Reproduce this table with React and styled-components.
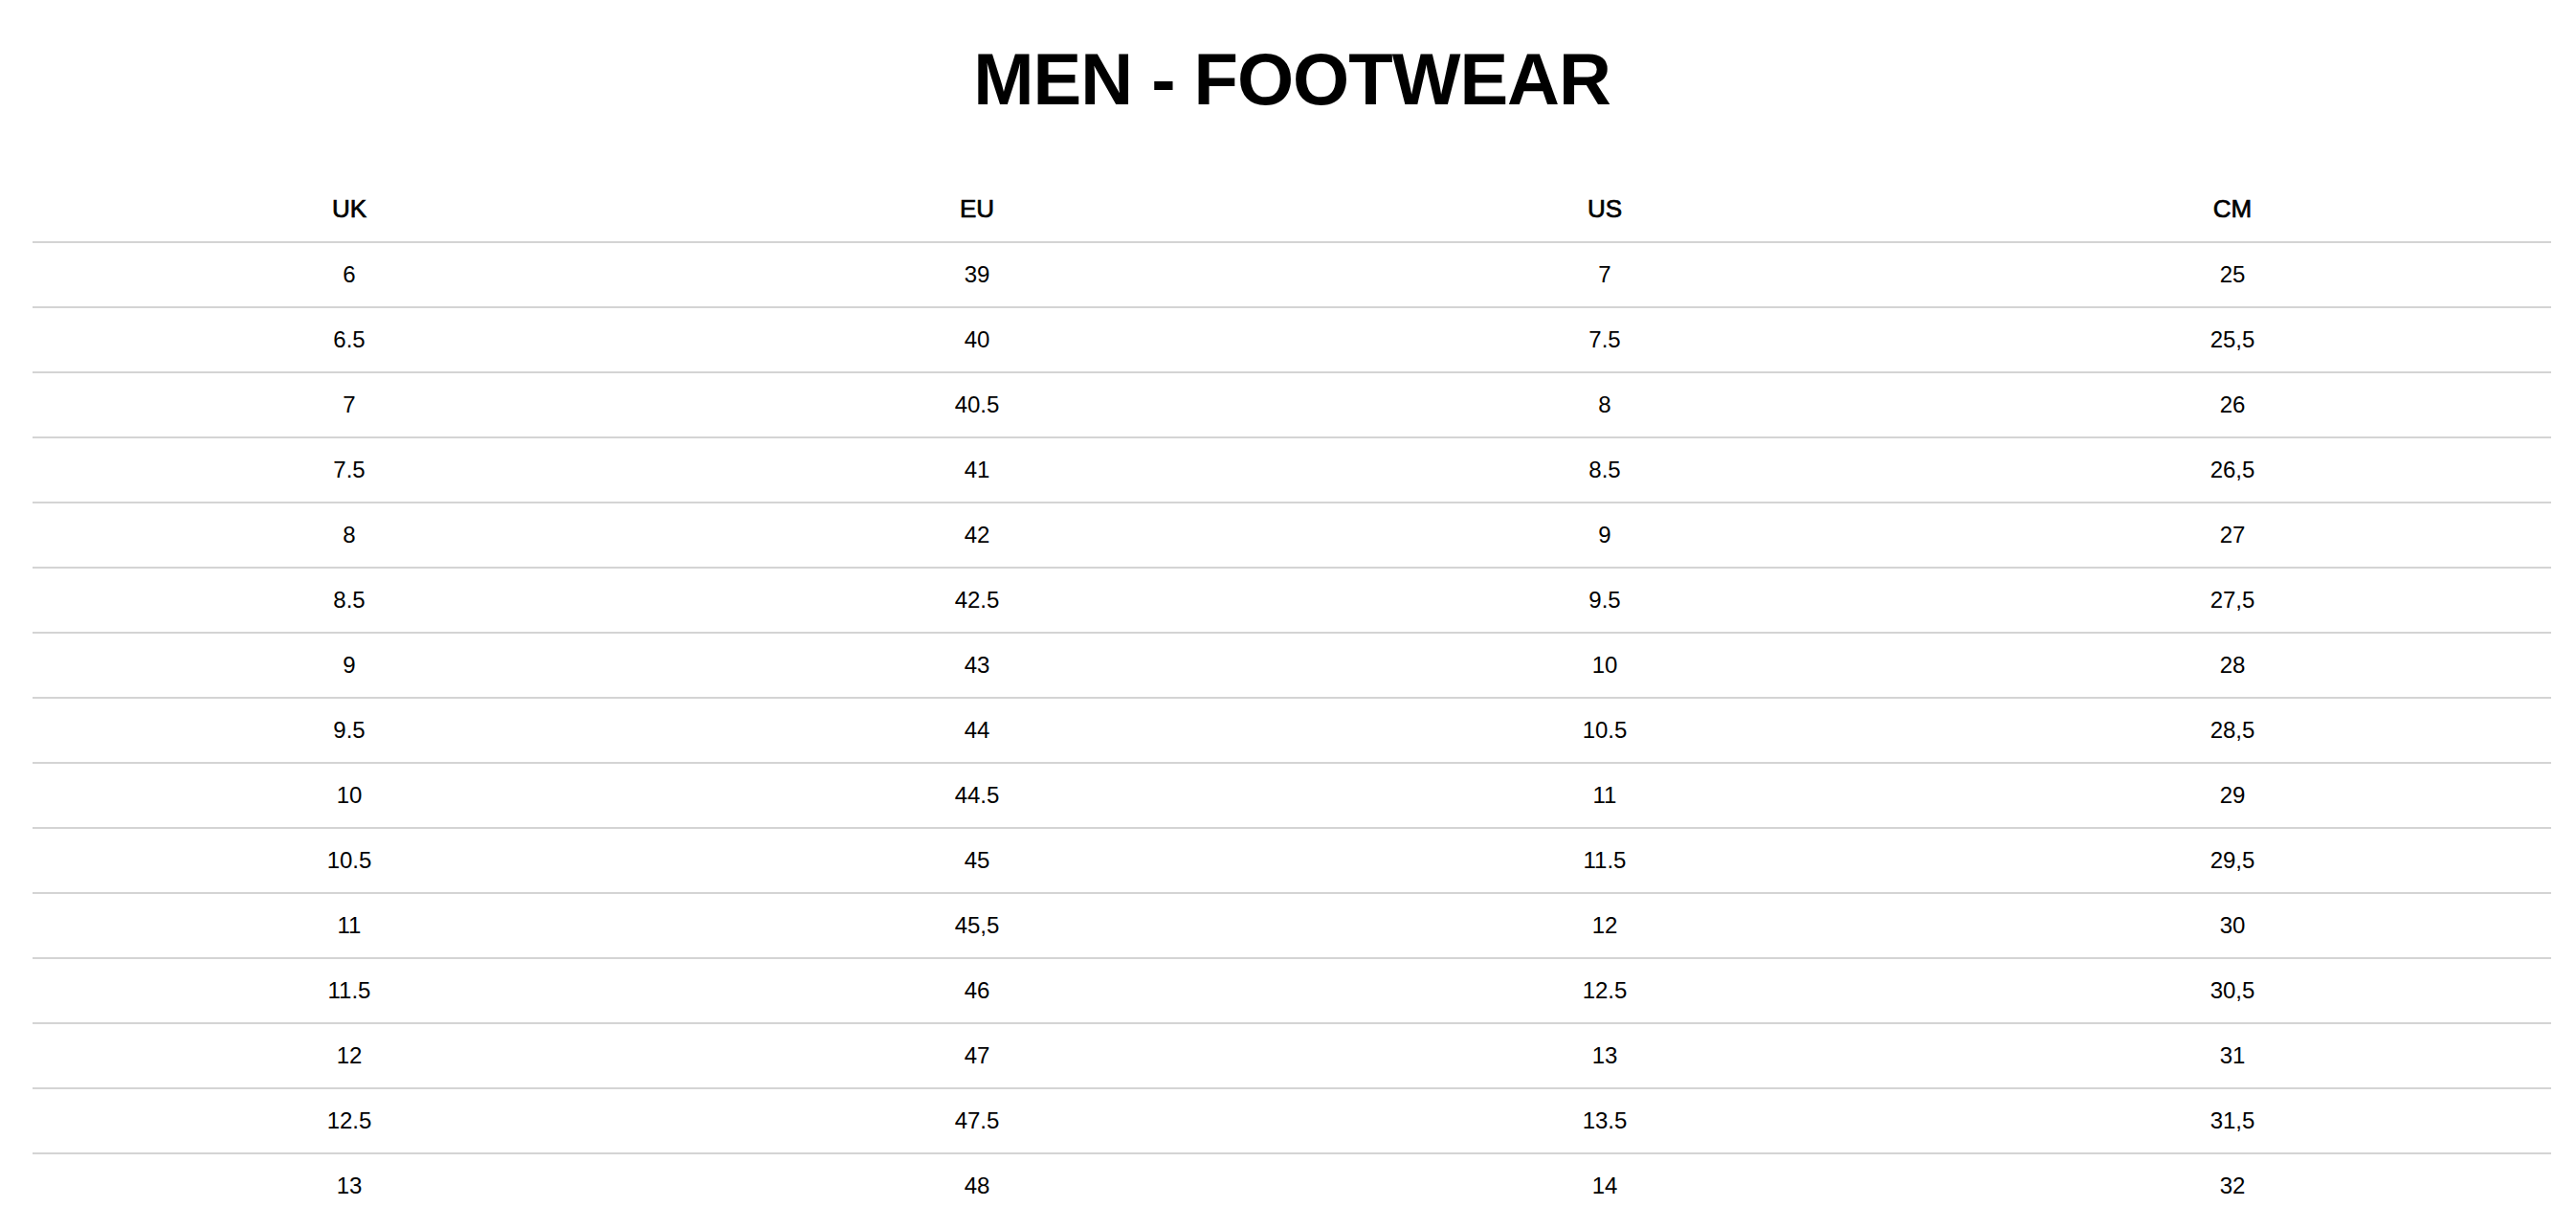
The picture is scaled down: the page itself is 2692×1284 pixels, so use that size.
import React from "react";
import styled, { createGlobalStyle } from "styled-components";

const Global = createGlobalStyle`
  html, body {
    margin: 0;
    padding: 0;
    background: #ffffff;
  }
  body {
    font-family: "Liberation Sans", Arial, Helvetica, sans-serif;
    color: #000000;
  }
`;

const Page = styled.div`
  padding: 45px 26px 0 34px;
  display: flex;
  flex-direction: column;
  align-items: stretch;
`;

const Title = styled.h1`
  margin: 0;
  font-size: 76px;
  line-height: 76px;
  font-weight: 700;
  letter-spacing: -1px;
  text-align: center;
  color: #000;
`;

const Table = styled.div`
  margin-top: 63px;
  display: flex;
  flex-direction: column;
`;

const Row = styled.div`
  display: grid;
  grid-template-columns: repeat(4, 1fr);
  align-items: center;
  padding: 0 5px 0 3px;
  height: ${(p) => (p.$head ? "68px" : "66px")};
  border-bottom: 2px solid #d4d4d4;

  &:last-child {
    border-bottom: none;
  }
`;

const Cell = styled.div`
  text-align: center;
  font-size: ${(p) => (p.$head ? "26px" : "24px")};
  font-weight: 400;
  -webkit-text-stroke: ${(p) => (p.$head ? "0.7px #000" : "0")};
  line-height: 1;
  color: #000;
`;

const headers = ["UK", "EU", "US", "CM"];
const rows = [
  ["6", "39", "7", "25"],
  ["6.5", "40", "7.5", "25,5"],
  ["7", "40.5", "8", "26"],
  ["7.5", "41", "8.5", "26,5"],
  ["8", "42", "9", "27"],
  ["8.5", "42.5", "9.5", "27,5"],
  ["9", "43", "10", "28"],
  ["9.5", "44", "10.5", "28,5"],
  ["10", "44.5", "11", "29"],
  ["10.5", "45", "11.5", "29,5"],
  ["11", "45,5", "12", "30"],
  ["11.5", "46", "12.5", "30,5"],
  ["12", "47", "13", "31"],
  ["12.5", "47.5", "13.5", "31,5"],
  ["13", "48", "14", "32"],
];

export default function App() {
  return (
    <>
      <Global />
      <Page>
        <Title>MEN - FOOTWEAR</Title>
        <Table role="table">
          <Row $head role="row">
            {headers.map((h) => (
              <Cell $head key={h} role="columnheader">
                {h}
              </Cell>
            ))}
          </Row>
          {rows.map((r, i) => (
            <Row key={i} role="row">
              {r.map((c, j) => (
                <Cell key={j} role="cell">
                  {c}
                </Cell>
              ))}
            </Row>
          ))}
        </Table>
      </Page>
    </>
  );
}
